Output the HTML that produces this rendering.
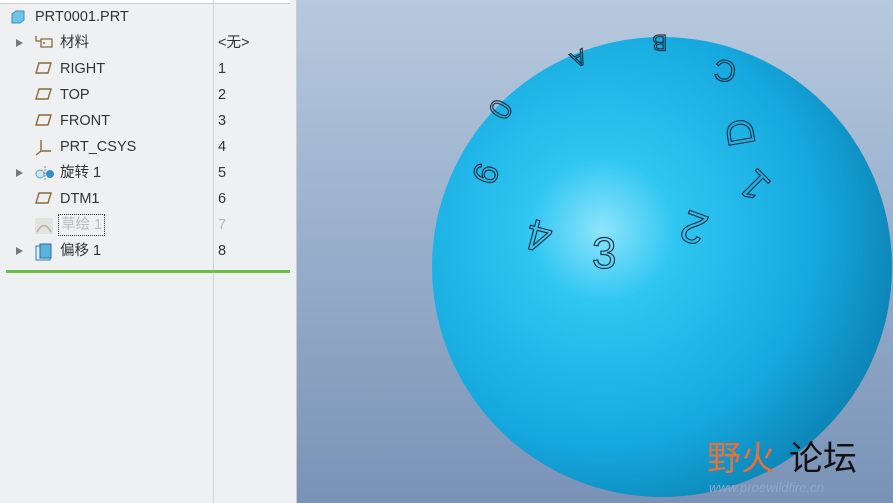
<!DOCTYPE html>
<html><head><meta charset="utf-8"><style>
body{margin:0;width:893px;height:503px;overflow:hidden;position:relative;font-family:"Liberation Sans","Noto Sans CJK SC",sans-serif;}
#panel{position:absolute;left:0;top:0;width:296px;height:503px;background:#eff0f1;border-right:1px solid #c8ccd0;}
#vp{position:absolute;left:297px;top:0;width:596px;height:503px;background:linear-gradient(#b7c9dd,#97aecb 50%,#7a92b6);}
.row{position:absolute;left:0;width:290px;height:26px;font-size:14.5px;color:#333;line-height:26px;}
.row .n{position:absolute;left:60px;white-space:nowrap}
.row .v{position:absolute;left:218px;white-space:nowrap}
.tri{position:absolute;left:16px;top:9px;width:0;height:0;border-left:7px solid #777;border-top:4.5px solid transparent;border-bottom:4.5px solid transparent}
.ic{position:absolute;left:34px;top:5px}
</style></head><body>
<div id="panel">
<div style="position:absolute;left:0;top:0;width:290px;height:3px;border-bottom:1px solid #ccc;background:#fff"></div>
<div style="position:absolute;left:213px;top:0;width:1px;height:503px;background:#d0d3d6"></div>
<div style="position:absolute;left:6px;top:270px;width:284px;height:3px;background:#6cc04a"></div>
<div class="row" style="top:4px"><svg class="ic" style="left:10px" width="16" height="16"><path d="M2 5 L6 2 H14 V11 L10 14 H2Z" fill="#6fc5e8" stroke="#3b8fb8"/></svg><span class="n" style="left:35px">PRT0001.PRT</span></div>
<div class="row" style="top:30px"><div class="tri"></div><svg class="ic" width="22" height="16"><path d="M2 1 V6 H7 M7 4 H18 V12 H7 Z" fill="none" stroke="#8a6a3e" stroke-width="1.3"/><circle cx="10" cy="8" r="1" fill="#8a6a3e"/></svg><span class="n">材料</span><span class="v">&lt;无&gt;</span></div>
<div class="row" style="top:56px"><svg class="ic" width="20" height="16"><path d="M5 2 H17 L14 12 H2Z" fill="none" stroke="#8a6a3e" stroke-width="1.4"/></svg><span class="n">RIGHT</span><span class="v">1</span></div>
<div class="row" style="top:82px"><svg class="ic" width="20" height="16"><path d="M5 2 H17 L14 12 H2Z" fill="none" stroke="#8a6a3e" stroke-width="1.4"/></svg><span class="n">TOP</span><span class="v">2</span></div>
<div class="row" style="top:108px"><svg class="ic" width="20" height="16"><path d="M5 2 H17 L14 12 H2Z" fill="none" stroke="#8a6a3e" stroke-width="1.4"/></svg><span class="n">FRONT</span><span class="v">3</span></div>
<div class="row" style="top:134px"><svg class="ic" width="20" height="18"><path d="M7 1 V12 H17 M7 12 L2 16" fill="none" stroke="#8a6a3e" stroke-width="1.4"/></svg><span class="n">PRT_CSYS</span><span class="v">4</span></div>
<div class="row" style="top:160px"><div class="tri"></div><svg class="ic" width="22" height="16"><circle cx="6" cy="9" r="4" fill="#cfe6f2" stroke="#5aa3cf"/><circle cx="16" cy="9" r="4" fill="#3a8fc8"/><path d="M11 1 V16" stroke="#888" stroke-dasharray="2 1"/></svg><span class="n">旋转 1</span><span class="v">5</span></div>
<div class="row" style="top:186px"><svg class="ic" width="20" height="16"><path d="M5 2 H17 L14 12 H2Z" fill="none" stroke="#8a6a3e" stroke-width="1.4"/></svg><span class="n">DTM1</span><span class="v">6</span></div>
<div class="row" style="top:212px;color:#bbb"><svg class="ic" width="20" height="18"><rect x="1" y="1" width="18" height="16" fill="#e2e2de"/><path d="M3 15 Q10 2 17 15" fill="none" stroke="#b8b0a0" stroke-width="1.5"/></svg><span class="n" style="left:59px;outline:1px dotted #333;line-height:20px;top:3px;padding:0 2px">草绘 1</span><span class="v">7</span></div>
<div class="row" style="top:238px"><div class="tri"></div><svg class="ic" width="22" height="18"><rect x="2" y="3" width="14" height="14" fill="#d6ecf6" stroke="#3a7fae"/><rect x="6" y="1" width="11" height="14" fill="#5db3df" stroke="#2c6f9c"/></svg><span class="n">偏移 1</span><span class="v">8</span></div>
</div>
<div id="vp">
<svg width="596" height="503" style="position:absolute;left:0;top:0">
<defs><radialGradient id="g" cx="0.37" cy="0.42" r="0.72"><stop offset="0" stop-color="#8ee4fb"/><stop offset="0.22" stop-color="#2fc6f2"/><stop offset="0.65" stop-color="#15a8de"/><stop offset="1" stop-color="#0a78a8"/></radialGradient></defs>
<circle cx="365" cy="267" r="230" fill="url(#g)"/>
<g font-family="Liberation Sans" fill="none" stroke="#1b3448" stroke-width="1.2">
<text x="295" y="268" font-size="44">3</text>
<text x="215" y="245" font-size="44" transform="rotate(195 235 232)">4</text>
<text x="380" y="238" font-size="44" transform="rotate(-160 395 225)">2</text>
<text x="455" y="185" font-size="42" transform="rotate(-135 465 180)">1</text>
<text x="430" y="130" font-size="38" transform="rotate(-100 450 125)">D</text>
<text x="410" y="70" font-size="30" transform="rotate(-170 425 65)">C</text>
<text x="340" y="45" font-size="22" transform="rotate(180 355 40)">B</text>
<text x="260" y="70" font-size="22" transform="rotate(155 275 62)">A</text>
<text x="185" y="125" font-size="30" transform="rotate(120 200 115)">0</text>
<text x="175" y="195" font-size="34" transform="rotate(110 190 180)">9</text>
</g>
<text x="410" y="470" font-family="Noto Sans CJK SC" font-size="34" fill="#e8703a">野火</text>
<text x="492" y="470" font-family="Noto Sans CJK SC" font-size="34" fill="#111">论坛</text>
<text x="412" y="492" font-family="Liberation Sans" font-style="italic" font-size="13" fill="#8fa8c8">www.proewildfire.cn</text>
</svg>
</div>
</body></html>
